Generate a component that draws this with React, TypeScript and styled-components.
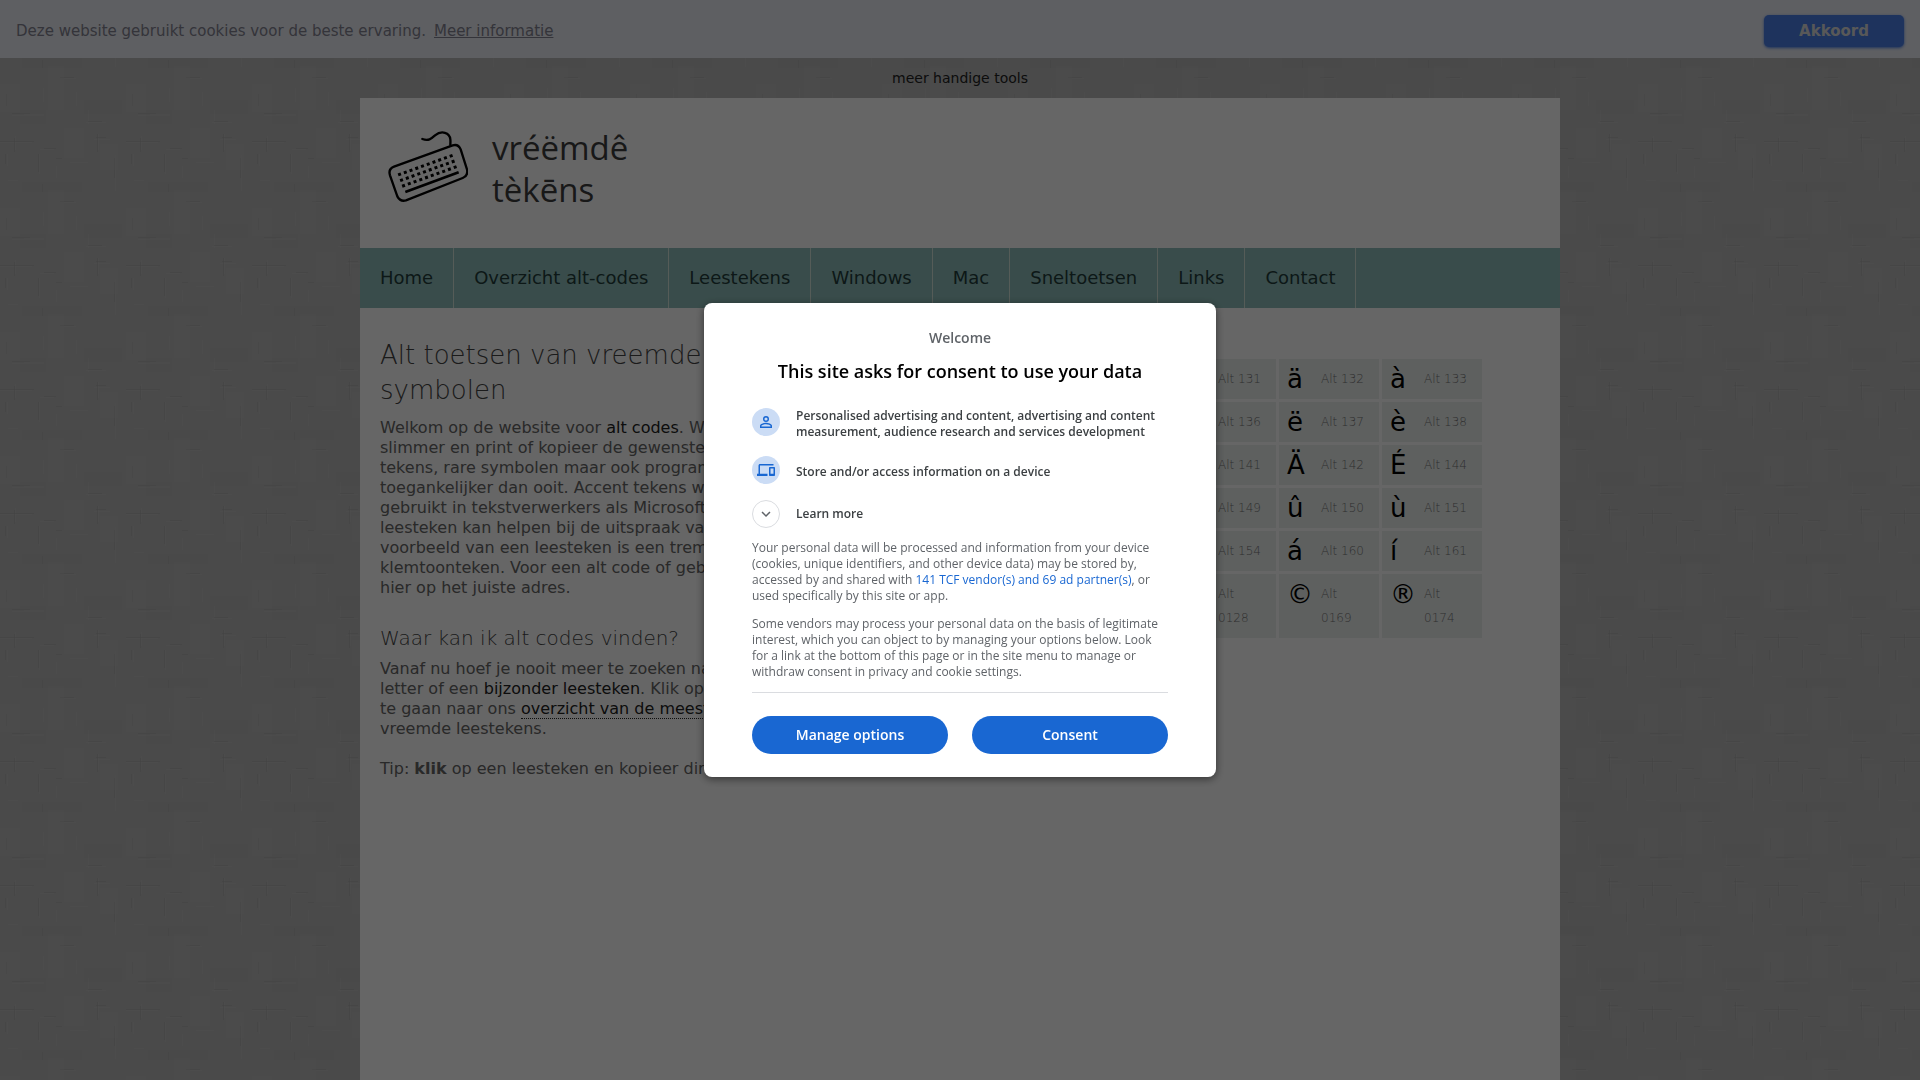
import React from "react";
import styled, { createGlobalStyle } from "styled-components";

const linen = `url("data:image/svg+xml,${encodeURIComponent(
  `<svg xmlns='http://www.w3.org/2000/svg' width='126' height='124' fill='none'>
  <g stroke='#c4c4c4' stroke-opacity='.5'>
    <path d='M7.500 30v12M39.500 30v20M115.500 31v36M98.500 10v16M15.500 12v14M43.500 88v14M76.500 92v14M56.500 42v12M88.500 110v14'/>
    <path d='M0 18.500h32M12 115.500h32M86 122.500h20M94 15.500h16M64 78.500h12M70 38.500h18M24 114.500h20M40 25.500h14M8 56.500h10'/>
  </g>
  <g stroke='#a9a9a9' stroke-opacity='.6'>
    <path d='M6.500 94v12M14.500 14v14M38.500 30v18M114.500 34v20M97.500 10v18M5.500 30v10M42.500 60v8'/>
    <path d='M0 17.500h34M12 113.500h18M88 121.500h14M60 77.500h14M56 34.500h6M96 13.500h10M44 24.500h12'/>
  </g>
  <g fill='#c0c0c0' fill-opacity='.25'>
    <path d='M64 4h20v30h-20zM48 66h16v44h-16zM100 20h18v26h-18zM0 84h20v28h-20z'/>
  </g>
  <g fill='#aeaeae' fill-opacity='.2'>
    <path d='M22 58h60v10h-60zM84 100h38v14h-38zM20 110h26v14h-26z'/>
  </g>
</svg>`
)}")`;

const GlobalStyle = createGlobalStyle`
  * { box-sizing: border-box; }
  body {
    margin: 0;
    color: #666;
    background: #b9b9b9 ${linen};
    font: 16px/20px "DejaVu Sans", Verdana, sans-serif;
    overflow: hidden;
  }
  h1, h2, p { margin: 0; }
  button { font: inherit; border: 0; cursor: pointer; }
`;

const CookieBar = styled.div`
  display: flex;
  align-items: center;
  justify-content: space-between;
  height: 58px;
  padding: 4px 16px 0;
  background: #ebedf5;
  color: #838391;
  font-size: 15px;
`;

const CookieLink = styled.a`
  margin-left: 8px;
  color: #838391;
`;

const AcceptButton = styled.button`
  width: 140px;
  height: 32px;
  border-radius: 5px;
  background: #4b81e8;
  box-shadow: 0 1px 3px #4b81e8;
  color: #ddd;
  font-size: 15px;
  font-weight: bold;
`;

const Tools = styled.div`
  height: 40px;
  text-align: center;
  font-size: 14px;
  line-height: 40px;

  a {
    color: #222;
    text-decoration: none;
  }
`;

const Page = styled.div`
  max-width: 1200px;
  min-height: calc(100vh - 98px);
  margin: 0 auto;
  background: #fff;
`;

const Header = styled.header`
  display: flex;
  align-items: center;
  gap: 24px;
  height: 150px;
  padding: 0 28px 14px;
`;

const LogoText = styled.div`
  padding-top: 6px;
  color: #3c3c3c;
  font: 33px/42px "Open Sans", sans-serif;
`;

const Nav = styled.nav`
  display: flex;
  height: 60px;
  background: #8fbfbb;
`;

const NavLink = styled.a`
  padding: 0 20px;
  border-right: 1px solid #d5e5dc;
  color: #223c3b;
  font-size: 18px;
  line-height: 60px;
  text-decoration: none;
`;

const Content = styled.div`
  display: flex;
  justify-content: space-between;
  padding: 30px 75px 0 20px;
`;

const Article = styled.article`
  flex: 1;

  p { margin-bottom: 20px; }
`;

const Title = styled.h1`
  margin-bottom: 10px;
  color: #444;
  font-size: 26px;
  font-weight: 200;
  line-height: 35px;
`;

const Subtitle = styled.h2`
  margin: 28px 0 9px;
  color: #444;
  font-size: 20px;
  font-weight: 200;
  line-height: 24px;
`;

const TextLink = styled.a<{ $dotted?: boolean }>`
  color: #222;
  text-decoration: none;
  border-bottom: ${(p) => (p.$dotted ? "1px dotted #222" : "0")};
`;

const Codes = styled.table`
  align-self: flex-start;
  margin-top: 18px;
  border-spacing: 3px;
`;

const CodeCell = styled.td`
  width: 100px;
  padding: 0;
  background: #ebf0ee;
`;

const CodeEntry = styled.div`
  display: grid;
  grid-template-columns: 34px 48px;
  padding: 8px;
  line-height: 24px;
`;

const Glyph = styled.span`
  color: #000;
  font-size: 26px;
`;

const Code = styled.span`
  color: #777;
  font-size: 12px;
  font-weight: 200;
`;

const Overlay = styled.div`
  position: fixed;
  inset: 0;
  display: grid;
  place-items: center;
  background: rgba(0, 0, 0, 0.6);
`;

const Dialog = styled.section`
  width: 512px;
  padding: 25px 48px 23px;
  border-radius: 8px;
  background: #fff;
  box-shadow: 0 2px 8px rgba(0, 0, 0, 0.5);
  color: #5f6368;
  font: 12px/16px "Open Sans", "Noto Sans", sans-serif;
`;

const Welcome = styled.p`
  font-size: 14px;
  font-weight: 600;
  line-height: 20px;
  text-align: center;
`;

const DialogTitle = styled.h2`
  margin: 11px 0 25px;
  color: #000;
  font-size: 18px;
  font-weight: 600;
  line-height: 24px;
  text-align: center;
`;

const Purposes = styled.ul`
  display: grid;
  gap: 16px;
  margin: 0 0 12px;
  padding: 0;
  list-style: none;
`;

const Purpose = styled.li`
  display: flex;
  align-items: center;
  gap: 16px;
  min-height: 32px;
  color: #3c4043;
  font-weight: 600;
`;

const Badge = styled.span`
  display: grid;
  flex: none;
  align-self: flex-start;
  place-items: center;
  width: 28px;
  height: 28px;
  border-radius: 50%;
  background: #cbdcf5;
`;

const LearnMore = styled.button`
  display: flex;
  align-items: center;
  gap: 16px;
  padding: 0;
  background: none;
  color: #3c4043;
  font-weight: 600;
`;

const Chevron = styled(Badge)`
  border: 1px solid #dadce0;
  background: #fff;
`;

const Legal = styled.p`
  margin-top: 12px;

  a {
    color: #1967d2;
    text-decoration: none;
  }
`;

const Actions = styled.div`
  display: grid;
  grid-template-columns: 1fr 1fr;
  gap: 24px;
  margin-top: 12px;
  padding-top: 23px;
  border-top: 1px solid #dadce0;
`;

const Action = styled.button`
  height: 38px;
  border-radius: 19px;
  background: #1967d2;
  color: #fff;
  font-size: 14px;
  font-weight: 600;
`;

const menu = ["Home", "Overzicht alt-codes", "Leestekens", "Windows", "Mac", "Sneltoetsen", "Links", "Contact"];

const codes = [
  [["â", "131"], ["ä", "132"], ["à", "133"]],
  [["ê", "136"], ["ë", "137"], ["è", "138"]],
  [["ì", "141"], ["Ä", "142"], ["É", "144"]],
  [["ò", "149"], ["û", "150"], ["ù", "151"]],
  [["Ü", "154"], ["á", "160"], ["í", "161"]],
  [["€", "0128"], ["©", "0169"], ["®", "0174"]],
];

function Keyboard() {
  const rows = [0, 1, 2];
  const cols = [0, 1, 2, 3, 4, 5, 6, 7, 8, 9];
  return (
    <svg width="80" height="72" viewBox="0 0 240 216" fill="none" stroke="#000" aria-hidden="true">
      <path d="M103 27c20 7 28-2 38-11 20-16 44-8 46 12 1 7 0 11 0 17" strokeWidth="7" strokeLinecap="round" />
      <path d="M18 110 194 46q17-5 24 12l19 60q4 19-13 26L54 211q-17 5-26-12L6 136q-6-19 12-26Z" strokeWidth="7" />
      <path d="m52 186 160-59" strokeWidth="8" />
      <g fill="#000" stroke="none">
        {rows.map((r) =>
          cols.map((c) => (
            <rect key={`${r}-${c}`} x={30 + c * 17.200 + r * 6} y={129 - c * 6.200 + r * 17} width="9" height="9" transform={`rotate(-20 ${34 + c * 17.200 + r * 6} ${133 - c * 6.200 + r * 17})`} />
          ))
        )}
      </g>
    </svg>
  );
}

export default function App() {
  return (
    <>
      <GlobalStyle />
      <CookieBar>
        <span>
          Deze website gebruikt cookies voor de beste ervaring.
          <CookieLink href="#info">Meer informatie</CookieLink>
        </span>
        <AcceptButton>Akkoord</AcceptButton>
      </CookieBar>
      <Tools><a href="#tools">meer handige tools</a></Tools>
      <Page>
        <Header>
          <Keyboard />
          <LogoText>vréëmdê<br />tèkēns</LogoText>
        </Header>
        <Nav>
          {menu.map((m) => <NavLink key={m} href="#menu">{m}</NavLink>)}
        </Nav>
        <Content>
          <Article>
            <Title>Alt toetsen van vreemde<br />symbolen</Title>
            <p>
              Welkom op de website voor <TextLink href="#codes">alt codes</TextLink>. Wil<br />
              slimmer en print of kopieer de gewenste<br />
              tekens, rare symbolen maar ook program<br />
              toegankelijker dan ooit. Accent tekens wel<br />
              gebruikt in tekstverwerkers als Microsoft<br />
              leesteken kan helpen bij de uitspraak van<br />
              voorbeeld van een leesteken is een trema<br />
              klemtoonteken. Voor een alt code of gebr<br />
              hier op het juiste adres.
            </p>
            <Subtitle>Waar kan ik alt codes vinden?</Subtitle>
            <p>
              Vanaf nu hoef je nooit meer te zoeken naar<br />
              letter of een <TextLink href="#tekens">bijzonder leesteken</TextLink>. Klik op<br />
              te gaan naar ons <TextLink href="#overzicht" $dotted>overzicht van de meest</TextLink><br />
              vreemde leestekens.
            </p>
            <p>Tip: <b>klik</b> op een leesteken en kopieer dire</p>
          </Article>
          <Codes>
            <tbody>
              {codes.map((row) => (
                <tr key={row[0][1]}>
                  {row.map(([glyph, code]) => (
                    <CodeCell key={code}>
                      <CodeEntry><Glyph>{glyph}</Glyph><Code>Alt {code}</Code></CodeEntry>
                    </CodeCell>
                  ))}
                </tr>
              ))}
            </tbody>
          </Codes>
        </Content>
      </Page>
      <Overlay>
        <Dialog role="dialog" aria-modal="true" aria-labelledby="consent-title">
          <Welcome>Welcome</Welcome>
          <DialogTitle id="consent-title">This site asks for consent to use your data</DialogTitle>
          <Purposes>
            <Purpose>
              <Badge>
                <svg width="18" height="18" viewBox="0 0 24 24" fill="#1967d2" aria-hidden="true">
                  <path d="M12 5.900a2.100 2.100 0 1 1 0 4.200 2.100 2.100 0 0 1 0-4.200m0 9c2.970 0 6.100 1.460 6.100 2.100v1.100H5.900V17c0-.640 3.130-2.100 6.100-2.100M12 4a4 4 0 1 0 0 8 4 4 0 0 0 0-8m0 9c-2.670 0-8 1.340-8 4v3h16v-3c0-2.660-5.330-4-8-4" />
                </svg>
              </Badge>
              Personalised advertising and content, advertising and content measurement, audience research and services development
            </Purpose>
            <Purpose>
              <Badge>
                <svg width="18" height="18" viewBox="0 0 24 24" fill="#1967d2" aria-hidden="true">
                  <path d="M4 6h18V4H4c-1.100 0-2 .9-2 2v11H0v3h14v-3H4zm19 2h-6c-.55 0-1 .45-1 1v10c0 .55.450 1 1 1h6c.55 0 1-.45 1-1V9c0-.55-.45-1-1-1m-1 9h-4v-7h4z" />
                </svg>
              </Badge>
              Store and/or access information on a device
            </Purpose>
          </Purposes>
          <LearnMore>
            <Chevron>
              <svg width="18" height="18" viewBox="0 0 24 24" fill="#5f6368" aria-hidden="true">
                <path d="M7.410 8.590 12 13.170l4.590-4.580L18 10l-6 6-6-6z" />
              </svg>
            </Chevron>
            Learn more
          </LearnMore>
          <Legal>
            Your personal data will be processed and information from your device (cookies, unique
            identifiers, and other device data) may be stored by, accessed by and shared with{" "}
            <a href="#vendors">141 TCF vendor(s) and 69 ad partner(s)</a>, or used specifically by this site or app.
          </Legal>
          <Legal>
            Some vendors may process your personal data on the basis of legitimate interest, which you
            can object to by managing your options below. Look for a link at the bottom of this page or
            in the site menu to manage or withdraw consent in privacy and cookie settings.
          </Legal>
          <Actions>
            <Action>Manage options</Action>
            <Action>Consent</Action>
          </Actions>
        </Dialog>
      </Overlay>
    </>
  );
}
